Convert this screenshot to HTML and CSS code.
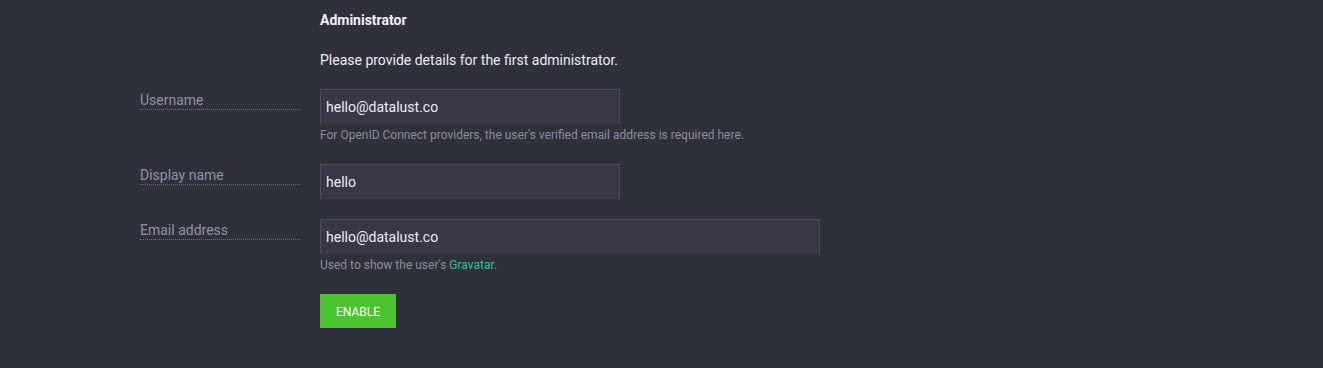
FILE: index.html
```html
<!DOCTYPE html>
<html>
<head>
<meta charset="utf-8">
<link rel="stylesheet" href="styles.css">
</head>
<body>
<div class="page">
  <div class="intro">
    <h2 class="title">Administrator</h2>
    <p class="lead">Please provide details for the first administrator.</p>
  </div>
  <div class="group">
    <label class="label"><span class="label-text">Username</span></label>
    <div class="field">
      <input class="input" type="text" value="hello@datalust.co">
      <div class="help">For OpenID Connect providers, the user's verified email address is required here.</div>
    </div>
  </div>
  <div class="group">
    <label class="label"><span class="label-text">Display name</span></label>
    <div class="field">
      <input class="input" type="text" value="hello">
    </div>
  </div>
  <div class="group">
    <label class="label"><span class="label-text">Email address</span></label>
    <div class="field">
      <input class="input wide" type="text" value="hello@datalust.co">
      <div class="help">Used to show the user's <a class="link" href="#">Gravatar</a>.</div>
    </div>
  </div>
  <div class="actions">
    <button class="button" type="button">Enable</button>
  </div>
</div>
</body>
</html>
```
FILE: styles.css
```css
html, body {
  margin: 0;
  padding: 0;
  background: #30303b;
  height: 100%;
}
body {
  font-family: Roboto, "Liberation Sans", sans-serif;
  color: #e8e8f0;
}
.page {
  padding: 11px 0 0 140px;
}
.intro {
  margin-left: 180px;
}
.title {
  margin: 0;
  font-size: 14px;
  font-weight: 700;
  line-height: 18px;
  color: #f0f0f5;
}
.lead {
  margin: 21px 0 0;
  font-size: 14px;
  line-height: 20px;
  color: #ececf2;
}
.group {
  display: grid;
  grid-template-columns: 160px 1fr;
  column-gap: 20px;
  margin-top: 19px;
}
.group + .group {
  margin-top: 20px;
}
.label {
  display: block;
  margin-top: 1px;
  align-self: start;
}
.label-text {
  display: block;
  padding-top: 2px;
  font-size: 14px;
  line-height: 17px;
  color: #9090a6;
  border-bottom: 1px dotted #6c6c82;
}
.field {
  display: flex;
  flex-direction: column;
  align-items: flex-start;
}
.input {
  box-sizing: border-box;
  width: 300px;
  height: 35px;
  margin: 0;
  padding: 0 5px;
  background: #393746;
  border: 1px solid #4c4a5d;
  border-bottom: none;
  color: #ececf2;
  font-family: Roboto, "Liberation Sans", sans-serif;
  font-size: 14px;
  outline: none;
}
.input.wide {
  width: 500px;
}
.help {
  margin-top: 3px;
  font-size: 12px;
  line-height: 17px;
  color: #8c8c9e;
}
.link {
  color: #2ec28e;
  text-decoration: none;
}
.actions {
  margin: 20px 0 0 180px;
}
.button {
  display: block;
  width: 76px;
  height: 34px;
  padding: 1px 0 0;
  border: none;
  background: #4bc430;
  color: #ffffff;
  font-family: Roboto, "Liberation Sans", sans-serif;
  font-size: 12px;
  text-transform: uppercase;
  cursor: pointer;
}
```
